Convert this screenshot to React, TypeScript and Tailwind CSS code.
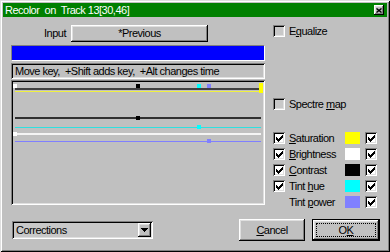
import type { ReactNode } from 'react'

const raised = 'shadow-[inset_-1px_-1px_#000,inset_1px_1px_#fff,inset_-2px_-2px_#808080,inset_2px_2px_#dfdfdf]'
const sunken = 'shadow-[inset_1px_1px_#808080,inset_-1px_-1px_#fff,inset_2px_2px_#000,inset_-2px_-2px_#dfdfdf]'

function Tick() {
  return (
    <svg width="7" height="7" viewBox="0 0 7 7" shapeRendering="crispEdges" className="block">
      <path d="M0 2h1v3H0z M1 3h1v3H1z M2 4h1v3H2z M3 3h1v3H3z M4 2h1v3H4z M5 1h1v3H5z M6 0h1v3H6z" fill="#000" />
    </svg>
  )
}

function CheckBox({ checked }: { checked?: boolean }) {
  return (
    <span className={`flex h-[12px] w-[12px] shrink-0 items-start justify-start p-[2px] pl-[3px] pt-[3px] ${sunken} ${checked ? 'bg-white' : 'bg-[#c8c8c8]'}`}>
      {checked ? <Tick /> : null}
    </span>
  )
}

// label with one underlined access key
function Label({ text, at }: { text: string; at: number }) {
  return (
    <span className="whitespace-pre">
      {text.slice(0, at)}
      <span className="underline underline-offset-[1px]">{text[at]}</span>
      {text.slice(at + 1)}
    </span>
  )
}

function KeyGraph() {
  return (
    <svg width="250" height="121" className="block" shapeRendering="crispEdges">
      <rect x="2" y="6" width="245" height="2" fill="#404040" />
      <rect x="2" y="9" width="245" height="1" fill="#f0f040" />
      <rect x="2" y="35" width="246" height="2" fill="#303030" />
      <rect x="2" y="45" width="246" height="1" fill="#30e0e0" />
      <rect x="2" y="51" width="246" height="2" fill="#f4f4f4" />
      <rect x="2" y="59" width="246" height="1" fill="#8080ff" />
      <rect x="0" y="2" width="4" height="4" fill="#fff" />
      <rect x="123" y="2" width="4" height="4" fill="#000" />
      <rect x="184" y="2" width="4" height="4" fill="#00ffff" />
      <rect x="194" y="2" width="4" height="4" fill="#8080ff" />
      <rect x="246" y="1" width="4" height="10" fill="#ffff00" />
      <rect x="123" y="34" width="4" height="4" fill="#000" />
      <rect x="184" y="43" width="4" height="4" fill="#00ffff" />
      <rect x="0" y="50" width="4" height="4" fill="#fff" />
      <rect x="194" y="57" width="4" height="4" fill="#8080ff" />
    </svg>
  )
}

function ColorRow({ label, at, color, left = true }: { label: string; at: number; color: string; left?: boolean }) {
  return (
    <div className="flex h-[12px] items-center">
      {left ? <CheckBox checked /> : <span className="w-[12px]" />}
      <span className="ml-[4px] w-[56px]">
        <Label text={label} at={at} />
      </span>
      <span className="h-[12px] w-[15px]" style={{ background: color }} />
      <span className="ml-[5px]">
        <CheckBox checked />
      </span>
    </div>
  )
}

function Button({ children, className }: { children: ReactNode; className: string }) {
  return <div className={`flex h-[22px] items-center justify-center bg-[#c0c0c0] ${raised} ${className}`}>{children}</div>
}

export default function App() {
  return (
    <div className={`flex h-[252px] w-[390px] flex-col bg-[#c0c0c0] p-[3px] font-['Liberation_Sans',Arial,sans-serif] text-[11px] leading-none tracking-[-0.5px] text-black shadow-[inset_1px_1px_#dfdfdf,inset_-1px_-1px_#000,inset_2px_2px_#fff,inset_-2px_-2px_#808080]`}>
      <div className="flex h-[14px] items-center justify-between bg-[#008000] pl-[2px] pr-[3px] text-white">
        <span className="whitespace-pre">Recolor  on  Track 13[30,46]</span>
        <span className={`flex h-[10px] w-[10px] items-center justify-center bg-[#c0c0c0] ${raised}`}>
          <svg width="6" height="5" viewBox="0 0 6 5" className="block">
            <path d="M0.5 0.5L5.5 4.5M5.5 0.5L0.5 4.5" stroke="#000" strokeWidth="1.4" />
          </svg>
        </span>
      </div>

      <div className="flex h-[202px] pl-[8px] pt-[8px]">
        <div className="flex w-[254px] flex-col">
          <div className="flex h-[17px] items-center">
            <span className="w-[55px] text-right">Input</span>
            <Button className="ml-[5px] !h-[17px] w-[137px]">*Previous</Button>
          </div>
          <div className="mt-[3px] h-[16px] border-b border-l border-r border-t border-b-white border-l-[#808080] border-r-white border-t-[#808080] bg-[#0000ff]" />
          <div className={`mt-[2px] flex h-[16px] items-center whitespace-pre pl-[4px] ${sunken}`}>Move key,  +Shift adds key,  +Alt changes time</div>
          <div className={`mt-[1px] h-[125px] p-[2px] ${sunken}`}>
            <KeyGraph />
          </div>
        </div>

        <div className="ml-[8px] flex flex-col">
          <div className="flex h-[12px] items-center">
            <CheckBox />
            <span className="ml-[4px]">
              <Label text="Equalize" at={1} />
            </span>
          </div>
          <div className="mt-[61px] flex h-[12px] items-center">
            <CheckBox />
            <span className="ml-[4px]">
              <Label text="Spectre map" at={8} />
            </span>
          </div>
          <div className="mt-[22px] flex flex-col gap-[4px]">
            <ColorRow label="Saturation" at={0} color="#ffff00" />
            <ColorRow label="Brightness" at={0} color="#ffffff" />
            <ColorRow label="Contrast" at={0} color="#000000" />
            <ColorRow label="Tint hue" at={5} color="#00ffff" />
            <ColorRow label="Tint power" at={5} color="#8080ff" left={false} />
          </div>
        </div>
      </div>

      <div className="flex h-[22px] items-start pl-[9px] pr-[7px]">
        <div className={`mt-[2px] flex h-[18px] w-[141px] items-center justify-between bg-[#c8c8c8] pl-[4px] pr-[2px] ${sunken}`}>
          <span>Corrections</span>
          <span className={`flex h-[14px] w-[13px] items-center justify-center bg-[#c0c0c0] ${raised}`}>
            <svg width="7" height="4" viewBox="0 0 7 4" className="block" shapeRendering="crispEdges">
              <path d="M0 0h7L3.5 4z" fill="#000" />
            </svg>
          </span>
        </div>
        <Button className="ml-auto w-[66px]">
          <Label text="Cancel" at={0} />
        </Button>
        <div className="ml-[7px] h-[22px] w-[68px] border border-black">
          <div className={`h-full w-full bg-[#c0c0c0] p-[3px] ${raised}`}>
            <div className="flex h-full w-full items-center justify-center border border-dotted border-black">
              <Label text="OK" at={1} />
            </div>
          </div>
        </div>
      </div>
    </div>
  )
}
